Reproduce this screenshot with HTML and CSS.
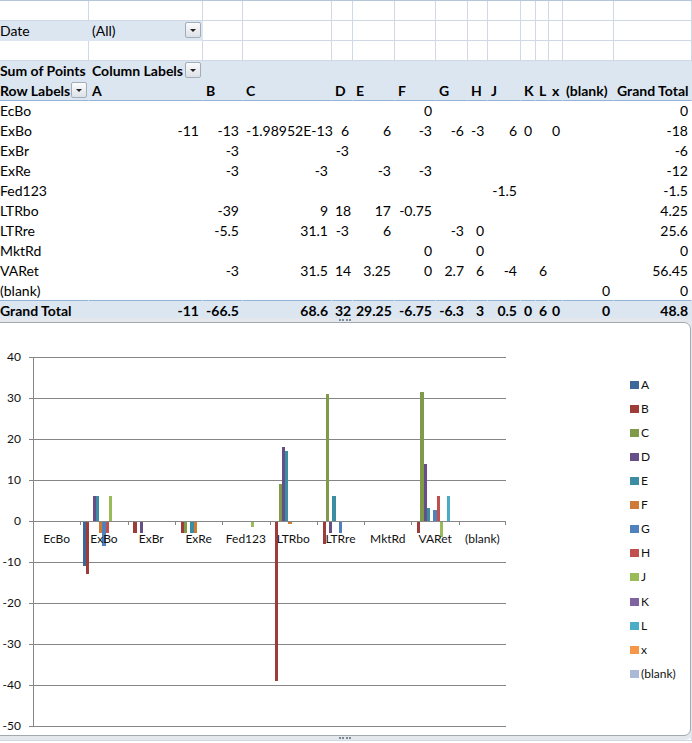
FILE: index.html
```html
<!DOCTYPE html>
<html lang="en">
<head>
    <meta charset="UTF-8">
    <title>Sum of Points</title>
    <link rel="stylesheet" href="styles.css">
</head>
<body>
    <table class="sheet">
        <colgroup>
            <col style="width:89px"><col style="width:114px"><col style="width:40px"><col style="width:89px">
            <col style="width:21px"><col style="width:42px"><col style="width:41px"><col style="width:32px">
            <col style="width:20px"><col style="width:33px"><col style="width:15px"><col style="width:13px">
            <col style="width:14px"><col style="width:51px"><col style="width:78px">
        </colgroup>
        <tr class="grid"><td></td><td></td><td></td><td></td><td></td><td></td><td></td><td></td><td></td><td></td><td></td><td></td><td></td><td></td><td></td></tr>
        <tr class="grid"><td class="pf">Date</td><td class="pf drop"><span class="dd"></span>(All)</td><td></td><td></td><td></td><td></td><td></td><td></td><td></td><td></td><td></td><td></td><td></td><td></td><td></td></tr>
        <tr class="grid"><td></td><td></td><td></td><td></td><td></td><td></td><td></td><td></td><td></td><td></td><td></td><td></td><td></td><td></td><td></td></tr>
        <tr class="pv head"><td>Sum of Points</td><td class="drop"><span class="dd"></span>Column Labels</td><td></td><td></td><td></td><td></td><td></td><td></td><td></td><td></td><td></td><td></td><td></td><td></td><td></td></tr>
        <tr class="pv head labels"><td class="drop"><span class="dd"></span>Row Labels</td><td>A</td><td>B</td><td>C</td><td>D</td><td>E</td><td>F</td><td>G</td><td>H</td><td>J</td><td>K</td><td>L</td><td>x</td><td>(blank)</td><td>Grand Total</td></tr>
        <tr class="data"><td>EcBo</td><td></td><td></td><td></td><td></td><td></td><td>0</td><td></td><td></td><td></td><td></td><td></td><td></td><td></td><td>0</td></tr>
        <tr class="data"><td>ExBo</td><td>-11</td><td>-13</td><td>-1.98952E-13</td><td>6</td><td>6</td><td>-3</td><td>-6</td><td>-3</td><td>6</td><td>0</td><td></td><td>0</td><td></td><td>-18</td></tr>
        <tr class="data"><td>ExBr</td><td></td><td>-3</td><td></td><td>-3</td><td></td><td></td><td></td><td></td><td></td><td></td><td></td><td></td><td></td><td>-6</td></tr>
        <tr class="data"><td>ExRe</td><td></td><td>-3</td><td>-3</td><td></td><td>-3</td><td>-3</td><td></td><td></td><td></td><td></td><td></td><td></td><td></td><td>-12</td></tr>
        <tr class="data"><td>Fed123</td><td></td><td></td><td></td><td></td><td></td><td></td><td></td><td></td><td>-1.5</td><td></td><td></td><td></td><td></td><td>-1.5</td></tr>
        <tr class="data"><td>LTRbo</td><td></td><td>-39</td><td>9</td><td>18</td><td>17</td><td>-0.75</td><td></td><td></td><td></td><td></td><td></td><td></td><td></td><td>4.25</td></tr>
        <tr class="data"><td>LTRre</td><td></td><td>-5.5</td><td>31.1</td><td>-3</td><td>6</td><td></td><td>-3</td><td>0</td><td></td><td></td><td></td><td></td><td></td><td>25.6</td></tr>
        <tr class="data"><td>MktRd</td><td></td><td></td><td></td><td></td><td></td><td>0</td><td></td><td>0</td><td></td><td></td><td></td><td></td><td></td><td>0</td></tr>
        <tr class="data"><td>VARet</td><td></td><td>-3</td><td>31.5</td><td>14</td><td>3.25</td><td>0</td><td>2.7</td><td>6</td><td>-4</td><td></td><td>6</td><td></td><td></td><td>56.45</td></tr>
        <tr class="data last"><td>(blank)</td><td></td><td></td><td></td><td></td><td></td><td></td><td></td><td></td><td></td><td></td><td></td><td></td><td>0</td><td>0</td></tr>
        <tr class="pv total"><td>Grand Total</td><td>-11</td><td>-66.5</td><td>68.6</td><td>32</td><td>29.25</td><td>-6.75</td><td>-6.3</td><td>3</td><td>0.5</td><td>0</td><td>6</td><td>0</td><td>0</td><td>48.8</td></tr>
        <tr class="grid rest"><td></td><td></td><td></td><td></td><td></td><td></td><td></td><td></td><td></td><td></td><td></td><td></td><td></td><td></td><td></td></tr>
    </table>

    <div class="chart">
        <svg class="plot" width="699" height="412" viewBox="-9 323 699 412">
            <g class="gridlines">
                <line x1="29" y1="357.5" x2="506" y2="357.5"/>
                <line x1="29" y1="398.5" x2="506" y2="398.5"/>
                <line x1="29" y1="439.5" x2="506" y2="439.5"/>
                <line x1="29" y1="480.5" x2="506" y2="480.5"/>
                <line x1="29" y1="562.5" x2="506" y2="562.5"/>
                <line x1="29" y1="603.5" x2="506" y2="603.5"/>
                <line x1="29" y1="644.5" x2="506" y2="644.5"/>
                <line x1="29" y1="685.5" x2="506" y2="685.5"/>
                <line x1="29" y1="726.5" x2="506" y2="726.5"/>
                <line x1="33.5" y1="357" x2="33.5" y2="727"/>
            </g>

            <g class="bars">
                <!-- ExBo -->
                <rect class="s-a" x="82.7" y="521" width="3.26" height="45.1"/>
                <rect class="s-b" x="86.0" y="521" width="3.26" height="53.3"/>
                <rect class="s-d" x="92.5" y="496.4" width="3.26" height="24.6"/>
                <rect class="s-e" x="95.8" y="496.4" width="3.26" height="24.6"/>
                <rect class="s-f" x="99.1" y="521" width="3.26" height="12.3"/>
                <rect class="s-g" x="102.3" y="521" width="3.26" height="24.6"/>
                <rect class="s-h" x="105.6" y="521" width="3.26" height="12.3"/>
                <rect class="s-j" x="108.8" y="496.4" width="3.26" height="24.6"/>
                <!-- ExBr -->
                <rect class="s-b" x="133.3" y="521" width="3.26" height="12.3"/>
                <rect class="s-d" x="139.8" y="521" width="3.26" height="12.3"/>
                <!-- ExRe -->
                <rect class="s-b" x="180.6" y="521" width="3.26" height="12.3"/>
                <rect class="s-c" x="183.9" y="521" width="3.26" height="12.3"/>
                <rect class="s-e" x="190.4" y="521" width="3.26" height="12.3"/>
                <rect class="s-f" x="193.7" y="521" width="3.26" height="12.3"/>
                <!-- Fed123 -->
                <rect class="s-j" x="250.7" y="521" width="3.26" height="6.2"/>
                <!-- LTRbo -->
                <rect class="s-b" x="275.2" y="521" width="3.26" height="159.9"/>
                <rect class="s-c" x="278.5" y="484.1" width="3.26" height="36.9"/>
                <rect class="s-d" x="281.7" y="447.2" width="3.26" height="73.8"/>
                <rect class="s-e" x="285.0" y="451.3" width="3.26" height="69.7"/>
                <rect class="s-f" x="288.3" y="521" width="3.26" height="3.1"/>
                <!-- LTRre -->
                <rect class="s-b" x="322.5" y="521" width="3.26" height="22.6"/>
                <rect class="s-c" x="325.8" y="393.5" width="3.26" height="127.5"/>
                <rect class="s-d" x="329.0" y="521" width="3.26" height="12.3"/>
                <rect class="s-e" x="332.3" y="496.4" width="3.26" height="24.6"/>
                <rect class="s-g" x="338.8" y="521" width="3.26" height="12.3"/>
                <!-- VARet -->
                <rect class="s-b" x="417.1" y="521" width="3.26" height="12.3"/>
                <rect class="s-c" x="420.4" y="391.9" width="3.26" height="129.1"/>
                <rect class="s-d" x="423.6" y="463.6" width="3.26" height="57.4"/>
                <rect class="s-e" x="426.9" y="507.7" width="3.26" height="13.3"/>
                <rect class="s-g" x="433.4" y="509.9" width="3.26" height="11.1"/>
                <rect class="s-h" x="436.7" y="496.4" width="3.26" height="24.6"/>
                <rect class="s-j" x="439.9" y="521" width="3.26" height="16.4"/>
                <rect class="s-l" x="446.5" y="496.4" width="3.26" height="24.6"/>
            </g>

            <g class="gridlines">
                <line x1="29" y1="521.5" x2="506" y2="521.5"/>
                <line x1="80.5" y1="521" x2="80.5" y2="525"/>
                <line x1="128.5" y1="521" x2="128.5" y2="525"/>
                <line x1="175.5" y1="521" x2="175.5" y2="525"/>
                <line x1="222.5" y1="521" x2="222.5" y2="525"/>
                <line x1="270.5" y1="521" x2="270.5" y2="525"/>
                <line x1="317.5" y1="521" x2="317.5" y2="525"/>
                <line x1="364.5" y1="521" x2="364.5" y2="525"/>
                <line x1="411.5" y1="521" x2="411.5" y2="525"/>
                <line x1="459.5" y1="521" x2="459.5" y2="525"/>
                <line x1="505.5" y1="521" x2="505.5" y2="525"/>
            </g>

            <g class="ticks-y">
                <text x="21" y="361">40</text>
                <text x="21" y="402">30</text>
                <text x="21" y="443">20</text>
                <text x="21" y="484">10</text>
                <text x="21" y="525">0</text>
                <text x="21" y="566">-10</text>
                <text x="21" y="607">-20</text>
                <text x="21" y="648">-30</text>
                <text x="21" y="689">-40</text>
                <text x="21" y="730">-50</text>
            </g>

            <g class="ticks-x">
                <text x="56.7" y="543">EcBo</text>
                <text x="104" y="543">ExBo</text>
                <text x="151.3" y="543">ExBr</text>
                <text x="198.6" y="543">ExRe</text>
                <text x="245.9" y="543">Fed123</text>
                <text x="293.2" y="543">LTRbo</text>
                <text x="340.5" y="543">LTRre</text>
                <text x="387.8" y="543">MktRd</text>
                <text x="435.1" y="543">VARet</text>
                <text x="482.4" y="543">(blank)</text>
            </g>

            <g class="legend">
                <rect class="s-a" x="630" y="381" width="9" height="8"/><text x="641" y="389">A</text>
                <rect class="s-b" x="630" y="405" width="9" height="8"/><text x="641" y="413">B</text>
                <rect class="s-c" x="630" y="429" width="9" height="8"/><text x="641" y="437">C</text>
                <rect class="s-d" x="630" y="453" width="9" height="8"/><text x="641" y="461">D</text>
                <rect class="s-e" x="630" y="477" width="9" height="8"/><text x="641" y="485">E</text>
                <rect class="s-f" x="630" y="501" width="9" height="8"/><text x="641" y="509">F</text>
                <rect class="s-g" x="630" y="525" width="9" height="8"/><text x="641" y="533">G</text>
                <rect class="s-h" x="630" y="549" width="9" height="8"/><text x="641" y="557">H</text>
                <rect class="s-j" x="630" y="573" width="9" height="8"/><text x="641" y="581">J</text>
                <rect class="s-k" x="630" y="598" width="9" height="8"/><text x="641" y="606">K</text>
                <rect class="s-l" x="630" y="622" width="9" height="8"/><text x="641" y="630">L</text>
                <rect class="s-x" x="630" y="646" width="9" height="8"/><text x="641" y="654">x</text>
                <rect class="s-blank" x="630" y="670" width="9" height="8"/><text x="641" y="678">(blank)</text>
            </g>
        </svg>
    </div>
</body>
</html>
```

FILE: styles.css
```css
html, body {
    margin: 0;
    overflow: hidden;
}
body {
    position: relative;
    height: 743px;
    background: #fff;
    color: #000;
    font-family: Lato, "Open Sans", sans-serif;
    font-size: 14px;
}

/* worksheet */
.sheet {
    border-collapse: separate;
    border-spacing: 0;
    table-layout: fixed;
    width: 692px;
    border-top: 1px solid #b6c6da;
}
.sheet td {
    height: 19px;
    padding: 0 3px;
    line-height: 19px;
    white-space: nowrap;
    text-align: right;
    vertical-align: bottom;
    border-right: 1px solid transparent;
    border-bottom: 1px solid transparent;
}
.sheet td:first-child {
    padding-left: 0;
    text-align: left;
}
.grid td {
    border-right-color: #d0d7e5;
    border-bottom-color: #d0d7e5;
}
.grid td.pf {
    background: #dce6f1;
    border-color: #dce6f1;
    text-align: left;
}
.pv td {
    background: #dce6f1;
}
.head td {
    font-weight: bold;
    text-align: left;
}
.labels td {
    border-bottom-color: #95b3d7;
}
.data.last td {
    border-bottom-color: #95b3d7;
}
.total td {
    font-weight: bold;
}
.sheet td.drop {
    padding-right: 1px;
}
.rest td {
    height: 419px;
    background: repeating-linear-gradient(to bottom, transparent 0 19px, #d0d7e5 19px 20px);
}

/* filter dropdown button */
.dd {
    float: right;
    position: relative;
    width: 14px;
    height: 14px;
    margin-top: 1px;
    border: 1px solid #a3adba;
    border-radius: 2px;
    background: linear-gradient(#fbfbfc, #dde1e6);
}
.dd::after {
    content: "";
    position: absolute;
    left: 4px;
    top: 6px;
    border-left: 3px solid transparent;
    border-right: 3px solid transparent;
    border-top: 3px solid #222;
}

/* chart object floating over the sheet */
.chart {
    position: absolute;
    left: -10px;
    top: 322px;
    width: 699px;
    height: 412px;
    border: 1px solid #a3a9b1;
    border-radius: 0 7px 7px 0;
    background: #fff;
    box-shadow: 0 0 0 4px #e4e8ed;
}
.chart::before,
.chart::after {
    content: "";
    position: absolute;
    left: 348px;
    width: 12px;
    border-top: 2px dotted #7d8896;
}
.chart::before {
    top: -4px;
}
.chart::after {
    bottom: -4px;
}
.plot {
    display: block;
}
.gridlines line {
    stroke: #868686;
    stroke-width: 1;
    shape-rendering: crispEdges;
}
.bars rect,
.legend rect {
    shape-rendering: crispEdges;
}
.plot text {
    font-family: Lato, "Open Sans", sans-serif;
    font-size: 12px;
    fill: #111;
}
.ticks-y text {
    text-anchor: end;
}
.ticks-x text {
    text-anchor: middle;
}

.s-a { fill: #3f6699; }
.s-b { fill: #9e3c3a; }
.s-c { fill: #7f9a48; }
.s-d { fill: #664e86; }
.s-e { fill: #3b8da2; }
.s-f { fill: #cf7b38; }
.s-g { fill: #4f81bd; }
.s-h { fill: #c0504d; }
.s-j { fill: #9bbb59; }
.s-k { fill: #8064a2; }
.s-l { fill: #4bacc6; }
.s-x { fill: #f79646; }
.s-blank { fill: #aab9d7; }
```
